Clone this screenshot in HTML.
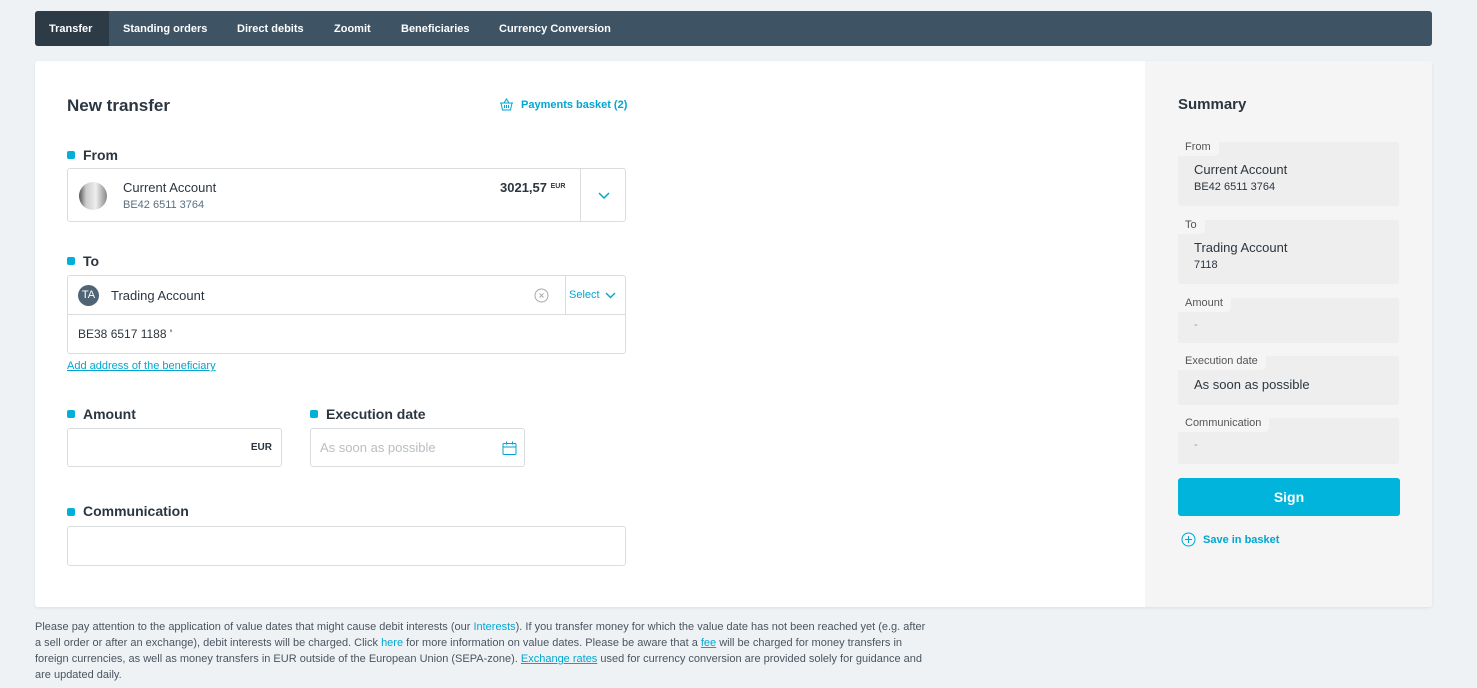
<!DOCTYPE html>
<html><head><meta charset="utf-8"><style>
*{box-sizing:border-box;margin:0;padding:0}
body{width:1477px;height:688px;background:#eff2f5;font-family:"Liberation Sans",sans-serif;color:#2b3640;position:relative;overflow:hidden}
.a{position:absolute}
.nav{left:35px;top:11px;width:1397px;height:35px;background:#3e5363;border-radius:3px;overflow:hidden}
.nav span{position:absolute;top:12px;font-size:11px;font-weight:bold;color:#fff}
.card{left:35px;top:61px;width:1397px;height:546px;background:#fff;border-radius:3px;box-shadow:0 1px 3px rgba(0,0,0,.08);overflow:hidden}
.side{left:1110px;top:0;width:287px;height:546px;background:#f5f5f5}
.lbl{font-size:14px;font-weight:bold;color:#2b3640}
.dot{position:absolute;width:8px;height:8px;background:#00b0d8;border-radius:2px}
.box{position:absolute;border:1px solid #d9dde0;border-radius:3px;background:#fff}
.c{color:#00a6d2}
.sb{position:absolute;left:33px;width:221px;background:#eeeeee;border-radius:3px}
.tab{position:absolute;left:0;top:0;height:14px;background:#f5f5f5;border-bottom-right-radius:5px;font-size:11px;color:#555;padding:0 8px 0 7px;line-height:1}
.foot{left:35px;top:619px;width:895px;font-size:11px;line-height:16px;color:#4a5560}
</style></head><body>
<div class="a nav">
<div class="a" style="left:0;top:0;width:74px;height:35px;background:#2d3b47"></div>
<span style="left:14px">Transfer</span>
<span style="left:88px">Standing orders</span>
<span style="left:202px">Direct debits</span>
<span style="left:299px">Zoomit</span>
<span style="left:366px">Beneficiaries</span>
<span style="left:464px">Currency Conversion</span>
</div>
<div class="a card">
<div class="a" style="left:32px;top:35px;font-size:17px;font-weight:bold">New transfer</div>
<svg class="a" style="left:464px;top:37px" width="15" height="13" viewBox="0 0 15 13" fill="none" stroke="#00a6d2" stroke-width="1"><path d="M1 5h13M2 5l1.5 7h8L13 5M5 5l2.5-4 2.5 4M5.5 7v3M7.5 7v3M9.5 7v3"/></svg>
<div class="a c" style="left:486px;top:38px;font-size:11px;font-weight:bold">Payments basket (2)</div>

<div class="dot" style="left:32px;top:90px"></div>
<div class="a lbl" style="left:48px;top:86px">From</div>
<div class="box" style="left:32px;top:107px;width:559px;height:54px">
<div class="a" style="left:11px;top:13px;width:28px;height:28px;border-radius:50%;background:linear-gradient(90deg,#555 0,#ccc 25%,#eee 60%,#888 100%)"></div>
<div class="a" style="left:55px;top:11px;font-size:13px">Current Account</div>
<div class="a" style="left:55px;top:30px;font-size:11px;color:#5a6f80">BE42 6511 3764</div>
<div class="a" style="left:432px;top:11px;font-size:13px;font-weight:bold">3021,57 <span style="font-size:7px;vertical-align:4px">EUR</span></div>
<div class="a" style="left:512px;top:0;width:1px;height:52px;background:#d9dde0"></div>
<svg class="a" style="left:530px;top:23px" width="12" height="8"><path d="M1 1l5 5 5-5" stroke="#00a6d2" stroke-width="1.5" fill="none"/></svg>
</div>

<div class="dot" style="left:32px;top:196px"></div>
<div class="a lbl" style="left:48px;top:192px">To</div>
<div class="box" style="left:32px;top:214px;width:559px;height:79px">
<div class="a" style="left:10px;top:9px;width:21px;height:21px;border-radius:50%;background:#4f6575;color:#fff;font-size:11px;text-align:center;line-height:21px">TA</div>
<div class="a" style="left:43px;top:12px;font-size:13px">Trading Account</div>
<svg class="a" style="left:466px;top:12px" width="15" height="15"><circle cx="7.5" cy="7.5" r="6.5" stroke="#aaa" fill="none"/><path d="M5.5 5.5l4 4M9.5 5.5l-4 4" stroke="#aaa"/></svg>
<div class="a" style="left:497px;top:0;width:1px;height:38px;background:#d9dde0"></div>
<div class="a c" style="left:501px;top:13px;font-size:11px">Select</div>
<svg class="a" style="left:537px;top:16px" width="11" height="7"><path d="M1 1l4.5 4.5L10 1" stroke="#00a6d2" stroke-width="1.4" fill="none"/></svg>
<div class="a" style="left:0;top:38px;width:557px;height:1px;background:#d9dde0"></div>
<div class="a" style="left:10px;top:51px;font-size:12px">BE38 6517 1188 '</div>
</div>
<div class="a c" style="left:32px;top:299px;font-size:11px;text-decoration:underline">Add address of the beneficiary</div>

<div class="dot" style="left:32px;top:349px"></div>
<div class="a lbl" style="left:48px;top:345px">Amount</div>
<div class="box" style="left:32px;top:367px;width:215px;height:39px"><div class="a" style="right:9px;top:13px;font-size:10px;font-weight:bold">EUR</div></div>
<div class="dot" style="left:275px;top:349px"></div>
<div class="a lbl" style="left:291px;top:345px">Execution date</div>
<div class="box" style="left:275px;top:367px;width:215px;height:39px"><div class="a" style="left:9px;top:11px;font-size:13px;color:#b8bec3">As soon as possible</div>
<svg class="a" style="left:191px;top:12px" width="15" height="14" fill="none" stroke="#00a6d2"><rect x="1" y="2.5" width="13" height="11" rx="1"/><path d="M1 6h13M4.5 0.5v3M10.5 0.5v3"/></svg></div>

<div class="dot" style="left:32px;top:447px"></div>
<div class="a lbl" style="left:48px;top:442px">Communication</div>
<div class="box" style="left:32px;top:465px;width:559px;height:40px"></div>

<div class="a side">
<div class="a" style="left:33px;top:35px;font-size:15px;font-weight:bold">Summary</div>
<div class="sb" style="top:81px;height:64px"><div class="tab">From</div><div class="a" style="left:16px;top:20px;font-size:13px">Current Account</div><div class="a" style="left:16px;top:39px;font-size:11px">BE42 6511 3764</div></div>
<div class="sb" style="top:159px;height:64px"><div class="tab">To</div><div class="a" style="left:16px;top:20px;font-size:13px">Trading Account</div><div class="a" style="left:16px;top:39px;font-size:11px">7118</div></div>
<div class="sb" style="top:237px;height:45px"><div class="tab">Amount</div><div class="a" style="left:16px;top:21px;font-size:11px;color:#999">-</div></div>
<div class="sb" style="top:295px;height:49px"><div class="tab">Execution date</div><div class="a" style="left:16px;top:21px;font-size:13px">As soon as possible</div></div>
<div class="sb" style="top:357px;height:46px"><div class="tab">Communication</div><div class="a" style="left:16px;top:21px;font-size:11px;color:#999">-</div></div>
<div class="a" style="left:33px;top:417px;width:222px;height:38px;background:#00b4db;border-radius:3px;color:#fff;font-weight:bold;font-size:14px;text-align:center;line-height:38px">Sign</div>
<svg class="a" style="left:36px;top:471px" width="15" height="15" fill="none" stroke="#00a6d2"><circle cx="7.5" cy="7.5" r="6.5"/><path d="M7.5 4v7M4 7.5h7"/></svg>
<div class="a c" style="left:58px;top:473px;font-size:11px;font-weight:bold">Save in basket</div>
</div>
</div>
<div class="a foot">Please pay attention to the application of value dates that might cause debit interests (our <span class="c">Interests</span>). If you transfer money for which the value date has not been reached yet (e.g. after a sell order or after an exchange), debit interests will be charged. Click <span class="c">here</span> for more information on value dates. Please be aware that a <span class="c" style="text-decoration:underline">fee</span> will be charged for money transfers in foreign currencies, as well as money transfers in EUR outside of the European Union (SEPA-zone). <span class="c" style="text-decoration:underline">Exchange rates</span> used for currency conversion are provided solely for guidance and are updated daily.</div>
</body></html>
